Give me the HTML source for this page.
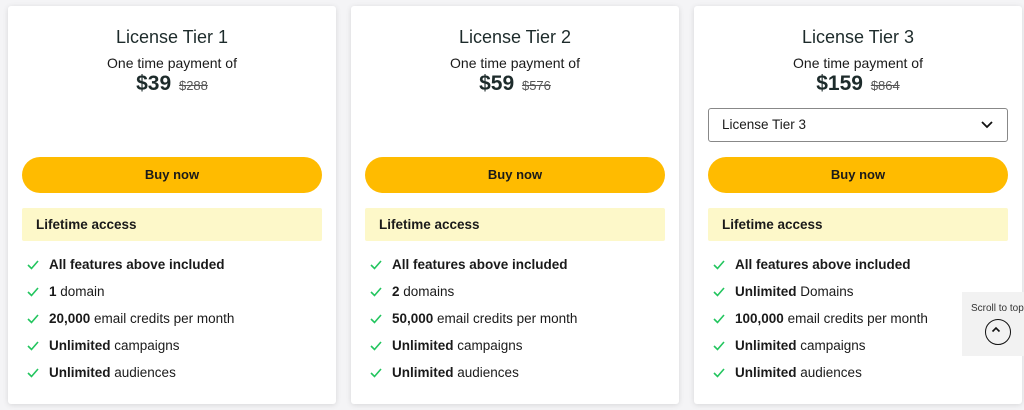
<!DOCTYPE html>
<html><head><style>
body{margin:0;width:1024px;height:410px;background:#f4f4f6;font-family:"Liberation Sans",Arial,sans-serif;color:#1a1a1a;position:relative;overflow:hidden}
.card{position:absolute;top:6px;width:328px;height:398px;background:#fff;border-radius:3px;box-shadow:0 1px 6px rgba(0,0,0,.12)}
.t{position:absolute;top:21px;width:100%;text-align:center;font-size:18px;color:#1d2b2b}
.o{position:absolute;top:49px;width:100%;text-align:center;font-size:14px}
.p{position:absolute;top:66px;width:100%;text-align:center;font-size:21px;font-weight:bold;color:#1d2b2b}
.p s{font-size:13px;font-weight:normal;color:#555;margin-left:2px}
.b{position:absolute;left:14px;top:151px;width:300px;height:36px;border-radius:18px;background:#ffbb00;text-align:center;line-height:36px;font-size:13px;font-weight:bold}
.l{position:absolute;left:14px;top:202px;width:300px;height:33px;background:#fdf8c9;border-radius:2px;line-height:33px;font-size:13.5px;font-weight:bold;box-sizing:border-box;padding-left:14px}
ul{position:absolute;left:19px;top:249px;margin:0;padding:0;list-style:none;font-size:13.5px}
li{height:27px;line-height:20px;position:relative;padding-left:22px}
li svg{position:absolute;left:0;top:5px}
.sel{position:absolute;left:14px;top:102px;width:300px;height:34px;border:1px solid #888;border-radius:3px;box-sizing:border-box;font-size:13.5px;line-height:32px;padding-left:13px}
.sel svg{position:absolute;right:14px;top:12px}
.st{position:absolute;left:962px;top:292px;width:62px;height:64px;background:#f2f2f2;font-size:10px;color:#333;padding-left:9px;box-sizing:border-box;padding-top:11px;white-space:nowrap}
.st div{position:absolute;left:23px;top:27px;width:24px;height:24px;border:1.6px solid #111;border-radius:50%}
</style></head><body>
<div class="card" style="left:8px">
<div class="t">License Tier 1</div><div class="o">One time payment of</div>
<div class="p">$39 <s>$288</s></div>
<div class="b">Buy now</div><div class="l">Lifetime access</div>
<ul>
<li><svg width="12" height="10"><path d="M1 5l3.5 3.5L11 1" stroke="#22c55e" stroke-width="1.6" fill="none"/></svg><b>All features above included</b></li>
<li><svg width="12" height="10"><path d="M1 5l3.5 3.5L11 1" stroke="#22c55e" stroke-width="1.6" fill="none"/></svg><b>1</b> domain</li>
<li><svg width="12" height="10"><path d="M1 5l3.5 3.5L11 1" stroke="#22c55e" stroke-width="1.6" fill="none"/></svg><b>20,000</b> email credits per month</li>
<li><svg width="12" height="10"><path d="M1 5l3.5 3.5L11 1" stroke="#22c55e" stroke-width="1.6" fill="none"/></svg><b>Unlimited</b> campaigns</li>
<li><svg width="12" height="10"><path d="M1 5l3.5 3.5L11 1" stroke="#22c55e" stroke-width="1.6" fill="none"/></svg><b>Unlimited</b> audiences</li>
</ul></div>
<div class="card" style="left:351px">
<div class="t">License Tier 2</div><div class="o">One time payment of</div>
<div class="p">$59 <s>$576</s></div>
<div class="b">Buy now</div><div class="l">Lifetime access</div>
<ul>
<li><svg width="12" height="10"><path d="M1 5l3.5 3.5L11 1" stroke="#22c55e" stroke-width="1.6" fill="none"/></svg><b>All features above included</b></li>
<li><svg width="12" height="10"><path d="M1 5l3.5 3.5L11 1" stroke="#22c55e" stroke-width="1.6" fill="none"/></svg><b>2</b> domains</li>
<li><svg width="12" height="10"><path d="M1 5l3.5 3.5L11 1" stroke="#22c55e" stroke-width="1.6" fill="none"/></svg><b>50,000</b> email credits per month</li>
<li><svg width="12" height="10"><path d="M1 5l3.5 3.5L11 1" stroke="#22c55e" stroke-width="1.6" fill="none"/></svg><b>Unlimited</b> campaigns</li>
<li><svg width="12" height="10"><path d="M1 5l3.5 3.5L11 1" stroke="#22c55e" stroke-width="1.6" fill="none"/></svg><b>Unlimited</b> audiences</li>
</ul></div>
<div class="card" style="left:694px">
<div class="t">License Tier 3</div><div class="o">One time payment of</div>
<div class="p">$159 <s>$864</s></div>
<div class="sel">License Tier 3<svg width="12" height="8"><path d="M1 1l5 5 5-5" stroke="#111" stroke-width="1.8" fill="none"/></svg></div>
<div class="b">Buy now</div><div class="l">Lifetime access</div>
<ul>
<li><svg width="12" height="10"><path d="M1 5l3.5 3.5L11 1" stroke="#22c55e" stroke-width="1.6" fill="none"/></svg><b>All features above included</b></li>
<li><svg width="12" height="10"><path d="M1 5l3.5 3.5L11 1" stroke="#22c55e" stroke-width="1.6" fill="none"/></svg><b>Unlimited</b> Domains</li>
<li><svg width="12" height="10"><path d="M1 5l3.5 3.5L11 1" stroke="#22c55e" stroke-width="1.6" fill="none"/></svg><b>100,000</b> email credits per month</li>
<li><svg width="12" height="10"><path d="M1 5l3.5 3.5L11 1" stroke="#22c55e" stroke-width="1.6" fill="none"/></svg><b>Unlimited</b> campaigns</li>
<li><svg width="12" height="10"><path d="M1 5l3.5 3.5L11 1" stroke="#22c55e" stroke-width="1.6" fill="none"/></svg><b>Unlimited</b> audiences</li>
</ul></div>
<div class="st">Scroll to top<div><svg width="24" height="24" style="position:absolute;left:-1.6px;top:-1.6px"><path d="M8.5 13.5l3.5-3.5 3.5 3.5" stroke="#111" stroke-width="1.6" fill="none"/></svg></div></div>
</body></html>
